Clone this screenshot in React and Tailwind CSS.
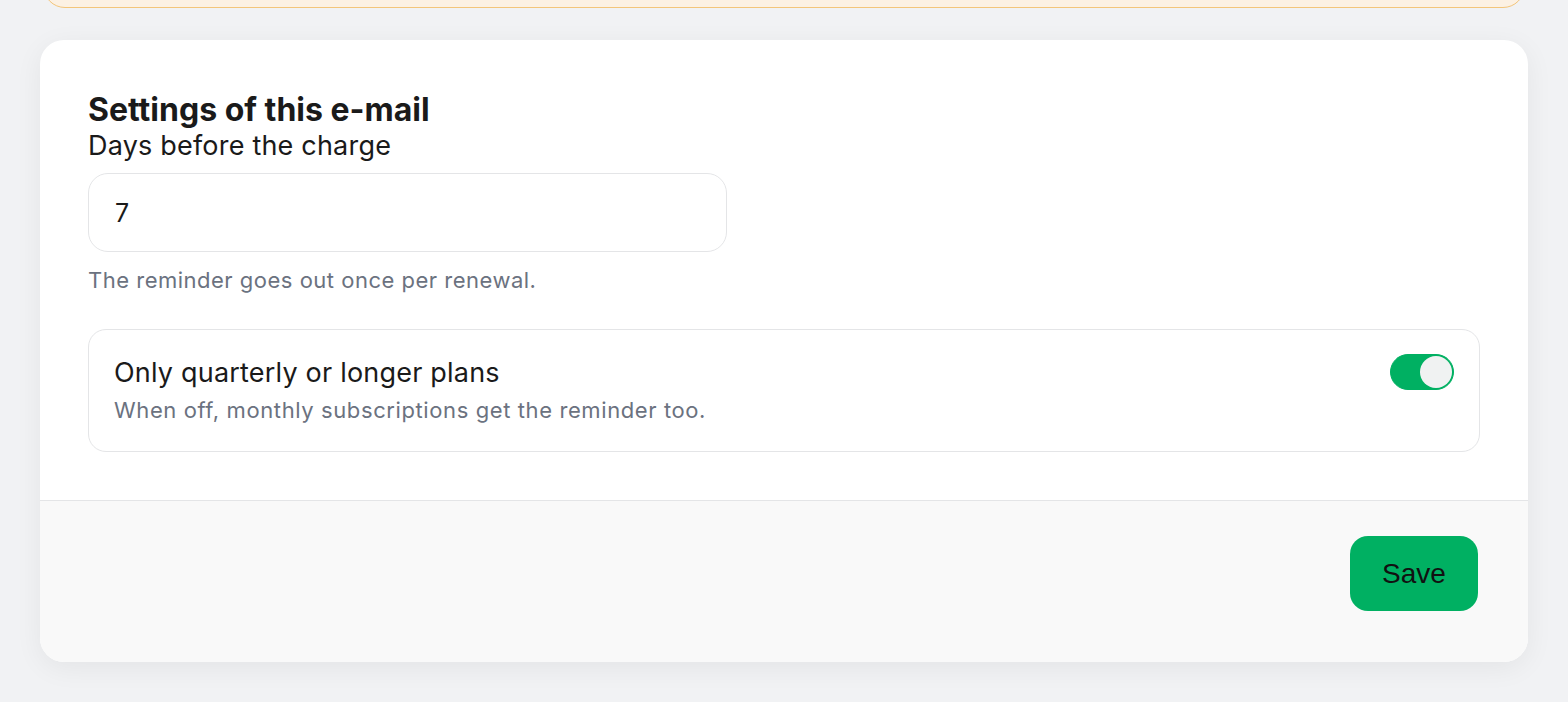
import { useState } from "react";

function Toggle({ on, onChange }) {
  return (
    <button
      type="button"
      onClick={() => onChange(!on)}
      className={`flex h-[36px] w-[64px] shrink-0 items-center rounded-full border p-[1px] ${
        on ? "border-[#00b062] bg-[#00b062] justify-end" : "border-[#d1d5db] bg-[#e5e7eb] justify-start"
      }`}
    >
      <span className="block h-[32px] w-[32px] rounded-full bg-[#f0f2f2]" />
    </button>
  );
}

export default function App() {
  const [days, setDays] = useState("7");
  const [quarterly, setQuarterly] = useState(true);

  return (
    <div className="min-h-screen bg-[#f1f2f4] px-[40px] pb-[40px] font-['Inter',sans-serif] text-[#1a1a1a]">
      <div className="mx-[3px] -mt-[52px] h-[60px] rounded-b-[22px] border-[1.5px] border-[#f3c57a] bg-[#fcf1e3]" />

      <div className="mt-[32px] overflow-hidden rounded-[24px] bg-white shadow-[0_6px_28px_rgba(0,0,0,0.06)]">
        <div className="px-[48px] pt-[51px] pb-[48px]">
          <h2 className="text-[32px] font-bold leading-[38px]">Settings of this e-mail</h2>
          <label className="block text-[27px] leading-[33px] tracking-[0.2px]">Days before the charge</label>

          <input
            value={days}
            onChange={(e) => setDays(e.target.value)}
            className="mt-[11px] block h-[79px] w-[639px] rounded-[20px] border border-[#e4e5e7] px-[26px] text-[25px] outline-none"
          />
          <p className="mt-[14px] text-[22px] leading-[28px] tracking-[0.5px] text-[#6b7280]">
            The reminder goes out once per renewal.
          </p>

          <div className="mt-[35px] flex h-[123px] items-center justify-between rounded-[18px] border border-[#e4e5e7] px-[25px]">
            <div>
              <div className="text-[27px] leading-[34px] tracking-[0.2px]">Only quarterly or longer plans</div>
              <div className="mt-[5px] text-[22px] leading-[30px] tracking-[0.6px] text-[#6b7280]">
                When off, monthly subscriptions get the reminder too.
              </div>
            </div>
            <div className="mt-[24px] self-start">
              <Toggle on={quarterly} onChange={setQuarterly} />
            </div>
          </div>
        </div>

        <div className="flex justify-end border-t border-[#e4e5e7] bg-[#f9f9f9] px-[50px] pt-[35px] pb-[51px]">
          <button
            type="button"
            className="h-[75px] w-[128px] rounded-[18px] bg-[#00b062] font-['Liberation_Sans',Arial,sans-serif] text-[28px] text-[#111]"
          >
            Save
          </button>
        </div>
      </div>
    </div>
  );
}
